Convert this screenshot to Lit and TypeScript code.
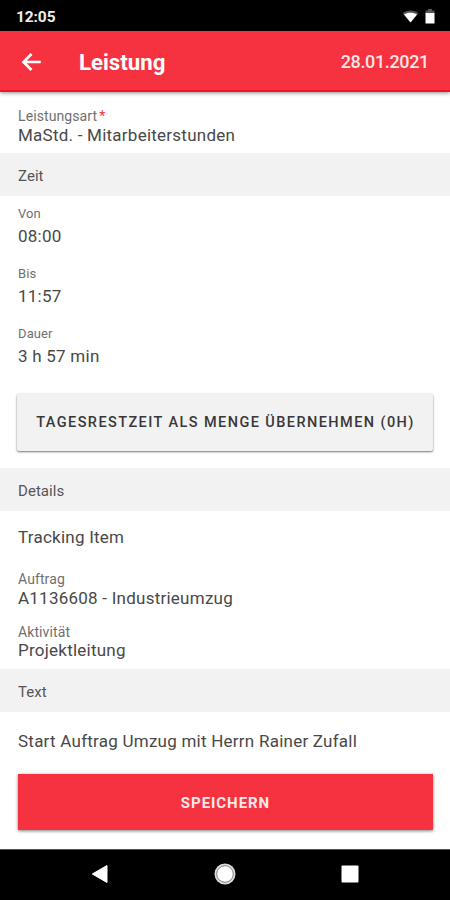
import { LitElement, html, css } from "lit";
import { customElement, property } from "lit/decorators.js";

@customElement("form-field")
class FormField extends LitElement {
  @property() label = "";
  @property() value = "";
  @property({ type: Boolean }) required = false;

  static styles = css`
    :host { display: block; white-space: nowrap; }
    .label { font-size: var(--label-size, 14px); line-height: 16px; color: #707070; letter-spacing: 0.1px; }
    .star { color: #f5313f; margin-left: 2px; }
    .value { font-size: 17px; line-height: 20px; color: #484848; margin-top: var(--field-gap, 0); letter-spacing: 0.24px; }
  `;

  render() {
    return html`
      ${this.label
        ? html`<div class="label">${this.label}${this.required ? html`<span class="star">*</span>` : ""}</div>`
        : ""}
      <div class="value">${this.value}</div>
    `;
  }
}

@customElement("app-root")
class AppRoot extends LitElement {
  static styles = css`
    :host {
      display: flex; flex-direction: column; width: 450px; height: 900px;
      background: #fff; font-family: Roboto, "Liberation Sans", sans-serif; overflow: hidden;
    }
    * { box-sizing: border-box; }
    .status {
      height: 31px; background: #000; color: #eee; display: flex; align-items: center;
      padding: 2px 15px 0 16px; font-size: 15.5px; font-weight: 700; letter-spacing: -0.1px; flex: none;
    }
    .grow { flex: 1; }
    .wifi { width: 17px; height: 14px; margin-right: 6px; }
    .battery { width: 10px; height: 16px; }
    .bar {
      height: 61px; flex: none; background: #f73240; color: #fff; display: flex; align-items: center;
      padding: 2px 22px 0 21px; border-bottom: 2px solid #f31420;
      box-shadow: 0 1px 4px rgba(0, 0, 0, 0.45); z-index: 1;
    }
    .back { width: 21px; height: 20px; margin-right: 37px; }
    .title { font-size: 22.2px; font-weight: 700; }
    .date { font-size: 18px; font-weight: 500; letter-spacing: -0.35px; color: #ffe5e6; margin-right: -1px; }
    .group { padding: 0 18px; display: flex; flex-direction: column; flex: none; }
    .kind { height: 61px; padding-top: 16px; --field-gap: 1px; }
    .time { height: 272px; padding-top: 10px; gap: 20px; --field-gap: 4px; --label-size: 13px; }
    .details { height: 158px; padding-top: 16px; gap: 17px; }
    .item { margin-bottom: 7px; }
    .order { --field-gap: 1px; margin-bottom: -1px; }
    .note { height: 137px; padding: 19px 17px 0 18px; }
    .band {
      height: 43px; flex: none; background: #f2f2f2; padding: 3px 18px 0; display: flex; align-items: center;
      font-size: 15px; color: #555; letter-spacing: 0.05px;
    }
    .btn {
      border: 0; padding: 0; font-family: inherit; display: flex; align-items: center;
      justify-content: center; white-space: nowrap; flex: none;
    }
    .take {
      height: 57px; margin: 8px -1px 0; padding-left: 1px; background: #f2f2f2; color: #383838; border-radius: 2px;
      font-size: 14.5px; font-weight: 500; letter-spacing: 1.42px;
      box-shadow: 0 1px 2px rgba(0, 0, 0, 0.5), 0 0 3px rgba(0, 0, 0, 0.1);
    }
    .save {
      height: 56px; margin-top: 23px; padding-top: 1px; background: #f73240; color: #ffe9ea; font-size: 15px;
      font-weight: 700; letter-spacing: 0.95px; box-shadow: 0 1px 3px rgba(0, 0, 0, 0.5);
    }
    .nav { height: 51px; flex: none; background: #000; border-top: 1px solid #555; }
    .nav svg { display: block; width: 450px; height: 50px; }
  `;

  render() {
    return html`
      <div class="status">
        <span>12:05</span><span class="grow"></span>
        <svg class="wifi" viewBox="0 0 17 14">
          <path d="M.5 3C5-.5 12-.5 16.500 3L8.500 12.500Z" fill="#555" />
          <path d="M2 4.600C5.500 2.200 11.500 2.200 15 4.600L8.500 12.500Z" fill="#fff" />
        </svg>
        <svg class="battery" viewBox="0 0 10 16">
          <path d="M3 0h4v1.500h2.500V5H.5V1.500H3Z" fill="#555" />
          <path d="M.5 4h9v10.500H.5Z" fill="#fff" />
        </svg>
      </div>
      <header class="bar">
        <svg class="back" viewBox="0 0 21 20" fill="none" stroke="#fff" stroke-width="2.700">
          <path d="M19.800 10H2.800M10.500 2L2.500 10l8 8" />
        </svg>
        <span class="title">Leistung</span><span class="grow"></span>
        <span class="date">28.01.2021</span>
      </header>
      <section class="group kind">
        <form-field label="Leistungsart" required value="MaStd. - Mitarbeiterstunden"></form-field>
      </section>
      <div class="band">Zeit</div>
      <section class="group time">
        <form-field label="Von" value="08:00"></form-field>
        <form-field label="Bis" value="11:57"></form-field>
        <form-field label="Dauer" value="3 h 57 min"></form-field>
        <button class="btn take">TAGESRESTZEIT ALS MENGE ÜBERNEHMEN (0H)</button>
      </section>
      <div class="band">Details</div>
      <section class="group details">
        <form-field class="item" value="Tracking Item"></form-field>
        <form-field class="order" label="Auftrag" value="A1136608 - Industrieumzug"></form-field>
        <form-field label="Aktivität" value="Projektleitung"></form-field>
      </section>
      <div class="band">Text</div>
      <section class="group note">
        <form-field value="Start Auftrag Umzug mit Herrn Rainer Zufall"></form-field>
        <button class="btn save">SPEICHERN</button>
      </section>
      <nav class="nav">
        <svg viewBox="0 0 450 50">
          <path d="M92.300 24L107 15.500V32.500Z" fill="#fff" stroke="#fff" stroke-linejoin="round" />
          <circle cx="225" cy="24" r="10.500" fill="#ddd" />
          <circle cx="225" cy="24" r="8.300" fill="#fff" stroke="#777" stroke-width=".9" />
          <rect x="341.500" y="15.500" width="17" height="17" rx="1" fill="#fff" />
        </svg>
      </nav>
    `;
  }
}
